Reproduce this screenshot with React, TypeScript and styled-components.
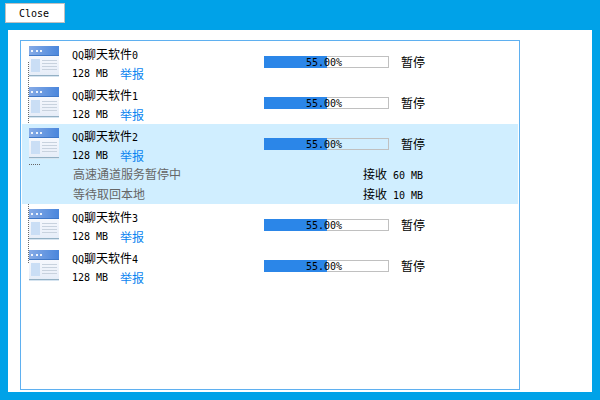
import React from "react";
import styled, { createGlobalStyle } from "styled-components";

const Global = createGlobalStyle`
  html, body { margin: 0; padding: 0; }
  body { width: 600px; height: 400px; overflow: hidden; background: #00a2e8; }
  * { box-sizing: border-box; }
`;

const Page = styled.div`
  width: 600px;
  height: 400px;
  padding: 3px 8px 8px 5px;
  display: flex;
  flex-direction: column;
  font-family: "DejaVu Sans Mono", "Noto Sans CJK SC", monospace;
  font-size: 10px;
  color: #000;
`;

const CloseButton = styled.button`
  width: 60px;
  height: 20px;
  padding: 0 2px 0 0;
  background: #fff;
  border: 1px solid #c0c0c0;
  font: inherit;
  color: #000;
  flex: none;
`;

const Panel = styled.div`
  margin: 7px 0 0 3px;
  flex: 1;
  background: #fff;
  padding: 10px 72px 2px 12px;
  display: flex;
`;

const ListBox = styled.div`
  flex: 1;
  border: 1px solid #5fb0f0;
  padding: 1px;
  display: flex;
  flex-direction: column;
  gap: 1px;
  position: relative;
`;

const TreeLine = styled.div`
  position: absolute;
  left: 7px;
  top: 21px;
  height: 201px;
  border-left: 1px dotted #666;
`;

const Row = styled.div<{ $selected?: boolean }>`
  background: ${(p) => (p.$selected ? "#d0eeff" : "transparent")};
  position: relative;
`;

const Main = styled.div`
  height: 40px;
  display: flex;
  padding-left: 7px;
`;

const IconWrap = styled.div`
  width: 30px;
  height: 31px;
  margin-top: 4px;
  flex: none;
  position: relative;
  svg { display: block; }
`;

const Info = styled.div`
  width: 192px;
  margin-left: 13px;
  flex: none;
  display: flex;
  flex-direction: column;
`;

const Name = styled.div`
  height: 24px;
  line-height: 26px;
  white-space: nowrap;
`;

const Cjk = styled.span`
  font-size: 12px;
`;

const Meta = styled.div`
  height: 16px;
  display: flex;
  white-space: nowrap;
`;

const Size = styled.span`
  width: 48px;
  line-height: 15px;
`;

const Report = styled.a`
  color: #0a84f0;
  font-size: 12px;
  line-height: 18px;
`;

const Progress = styled.div`
  width: 125px;
  height: 12px;
  margin-top: 14px;
  border: 1px solid #c0c0c0;
  position: relative;
  flex: none;
`;

const Fill = styled.div`
  position: absolute;
  left: -1px;
  top: -1px;
  bottom: -1px;
  background: #2b86e8;
`;

const Percent = styled.div`
  position: absolute;
  left: 41px;
  top: 0;
  line-height: 12px;
  white-space: nowrap;
`;

const Pause = styled.div`
  margin-left: 12px;
  margin-top: 12px;
  font-size: 12px;
  line-height: 18px;
`;

const Sub = styled.div`
  height: 20px;
  padding: 0 95px 0 51px;
  display: flex;
  justify-content: space-between;
  line-height: 23px;
  color: #666;
  font-size: 12px;
`;

const Received = styled.span`
  color: #000;
  font-size: 10px;
  b { font-weight: 400; font-size: 12px; margin-right: 6px; }
`;

const Branch = styled.div`
  position: absolute;
  left: 7px;
  top: 40px;
  width: 11px;
  border-top: 1px dotted #666;
`;

const AppIcon = () => (
  <svg width="30" height="31" viewBox="0 0 30 31">
    <defs>
      <linearGradient id="hd" x1="0" x2="1" y1="0" y2="0">
        <stop offset="0" stopColor="#86abe6" />
        <stop offset="1" stopColor="#4a86dc" />
      </linearGradient>
      <linearGradient id="bd" x1="0" x2="0" y1="0" y2="1">
        <stop offset="0" stopColor="#f6f8fd" />
        <stop offset="1" stopColor="#e6edf8" />
      </linearGradient>
    </defs>
    <rect width="30" height="10" fill="url(#hd)" />
    <rect y="9" width="30" height="1" fill="#3f78c8" />
    <rect x="2" y="4" width="2" height="2" fill="#eef4fc" />
    <rect x="7" y="4" width="2" height="2" fill="#eef4fc" />
    <rect x="11" y="4" width="2" height="2" fill="#eef4fc" />
    <rect y="10" width="30" height="19" fill="url(#bd)" />
    <rect x="2" y="13" width="9" height="13" fill="#cadef5" />
    <rect x="13" y="14" width="15" height="1" fill="#c8d2de" />
    <rect x="13" y="17" width="15" height="1" fill="#c8d2de" />
    <rect x="13" y="20" width="15" height="1" fill="#c8d2de" />
    <rect x="13" y="23" width="15" height="1" fill="#c8d2de" />
    <rect y="29" width="30" height="1" fill="#93b0c4" />
    <rect y="30" width="30" height="1" fill="#d6e4f0" />
  </svg>
);

const items = [0, 1, 2, 3, 4];

export default function App() {
  return (
    <Page>
      <Global />
      <CloseButton>Close</CloseButton>
      <Panel>
        <ListBox>
          <TreeLine />
          {items.map((i) => (
            <Row key={i} $selected={i === 2}>
              <Main>
                <IconWrap>
                  <AppIcon />
                </IconWrap>
                <Info>
                  <Name>QQ<Cjk>聊天软件</Cjk>{i}</Name>
                  <Meta>
                    <Size>128 MB</Size>
                    <Report>举报</Report>
                  </Meta>
                </Info>
                <Progress>
                  <Fill style={{ width: `${(125 * 55) / 100 - 5.75}px` }} />
                  <Percent>55.00%</Percent>
                </Progress>
                <Pause>暂停</Pause>
              </Main>
              {i === 2 && (
                <>
                  <Branch />
                  <Sub>
                    <span>高速通道服务暂停中</span>
                    <Received><b>接收</b>60 MB</Received>
                  </Sub>
                  <Sub>
                    <span>等待取回本地</span>
                    <Received><b>接收</b>10 MB</Received>
                  </Sub>
                </>
              )}
            </Row>
          ))}
        </ListBox>
      </Panel>
    </Page>
  );
}
